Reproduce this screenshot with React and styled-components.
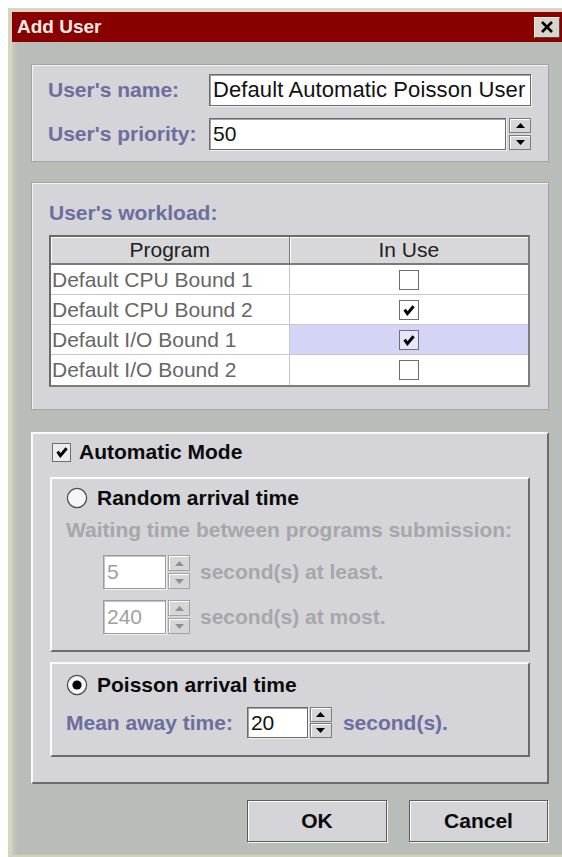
import React from "react";
import styled, { createGlobalStyle } from "styled-components";

const GlobalStyle = createGlobalStyle`
  html, body {
    margin: 0;
    padding: 0;
    background: #ffffff;
    overflow: hidden;
  }
  body {
    font-family: "Liberation Sans", Arial, sans-serif;
  }
  * { box-sizing: border-box; }
`;

const Page = styled.div`
  width: 562px;
  height: 857px;
  padding: 8px 0 0 8px;
`;

const Dialog = styled.div`
  width: 556px;
  height: 849px;
  background: #b9bdb8;
  border-top: 4px solid #ddd6c8;
  border-left: 4px solid #d8d5bf;
  border-bottom: 2px solid #d3d0bc;
  box-shadow: inset 5px 0 5px -3px #cbd0ca;
  display: flex;
  flex-direction: column;
`;

const TitleBar = styled.div`
  flex: none;
  height: 30px;
  background: #880000;
  display: flex;
  align-items: center;
  justify-content: space-between;
  padding: 0 4px 0 5px;
`;

const Title = styled.span`
  font-weight: bold;
  font-size: 19px;
  color: #f7ebe0;
`;

const CloseButton = styled.div`
  width: 26px;
  height: 21px;
  background: #d9d3c7;
  border: 1px solid;
  border-color: #f4efe6 #4e4a46 #4e4a46 #f4efe6;
  display: flex;
  align-items: center;
  justify-content: center;
`;

const Body = styled.div`
  flex: 1;
  display: flex;
  flex-direction: column;
  padding: 22px 15px 0 19px;
`;

const EtchedPanel = styled.section`
  background: #d5d4d9;
  border: 1px solid #a3a3a8;
  box-shadow: inset 1px 1px 0 #f3f3f5;
  padding: ${(p) => p.$pad};
  margin-top: ${(p) => p.$top || 0}px;
`;

const RaisedPanel = styled.section`
  background: #d5d4d9;
  border: 2px solid;
  border-color: #fbfbfb #6c6c6c #6c6c6c #fbfbfb;
  padding: ${(p) => p.$pad};
  margin-top: ${(p) => p.$top || 0}px;
`;

const FormGrid = styled.div`
  display: grid;
  grid-template-columns: 161px 1fr;
  row-gap: 12px;
  align-items: center;
`;

const Label = styled.span`
  font-size: 21px;
  font-weight: bold;
  line-height: 24px;
  white-space: nowrap;
  color: ${(p) => (p.$disabled ? "#a7a6ab" : "#6b6e9e")};
`;

const BoldText = styled.span`
  font-size: 21px;
  font-weight: bold;
  line-height: 22px;
  color: #0a0a0a;
  white-space: nowrap;
`;

const Field = styled.div`
  height: ${(p) => p.$h || 32}px;
  width: ${(p) => (p.$w ? `${p.$w}px` : "auto")};
  flex: ${(p) => (p.$w ? "none" : "1")};
  background: #ffffff;
  border: 1px solid ${(p) => (p.$disabled ? "#9a9a9a" : "#6a6a6a")};
  box-shadow: inset 1px 1px 0 ${(p) => (p.$disabled ? "#c4c4c4" : "#a4a4a4")},
    1px 1px 0 #f2f2f2;
  padding: 0 3px;
  display: flex;
  align-items: center;
  font-size: ${(p) => p.$size || 21}px;
  letter-spacing: ${(p) => p.$track || 0}px;
  color: ${(p) => (p.$disabled ? "#a0a0a0" : "#111111")};
  white-space: nowrap;
  overflow: hidden;
`;

const Spinner = styled.div`
  display: flex;
  gap: ${(p) => p.$gap || 2}px;
  height: ${(p) => p.$h}px;
  flex: ${(p) => (p.$grow ? "1" : "none")};
`;

const SpinButtons = styled.div`
  width: 22px;
  display: flex;
  flex-direction: column;
  justify-content: space-between;
`;

const SpinButton = styled.div`
  height: ${(p) => p.$h}px;
  background: #d6d6d9;
  border: 1px solid ${(p) => (p.$disabled ? "#a2a2a2" : "#7c7c7c")};
  box-shadow: inset 1px 1px 0 #ffffff;
  display: flex;
  align-items: center;
  justify-content: center;
`;

const SectionLabel = styled(Label)`
  display: block;
  margin-bottom: 10px;
`;

const Table = styled.div`
  border: 2px solid;
  border-color: #6a6a6a #7c7c7c #7c7c7c #6a6a6a;
  background: #ffffff;
`;

const HeaderRow = styled.div`
  display: grid;
  grid-template-columns: 1fr 1fr;
  height: 28px;
`;

const HeaderCell = styled.div`
  background: #d8d8db;
  border-right: 1px solid #7a7a7a;
  border-bottom: 2px solid #7a7a7a;
  box-shadow: inset 1px 1px 0 #ffffff;
  display: flex;
  align-items: center;
  justify-content: center;
  font-size: 21px;
  color: #202020;
  &:last-child {
    border-right: none;
  }
`;

const Row = styled.div`
  display: grid;
  grid-template-columns: 1fr 1fr;
  height: 30px;
  border-bottom: 1px solid #c9c9cd;
  &:last-child {
    border-bottom: none;
  }
`;

const NameCell = styled.div`
  display: flex;
  align-items: center;
  padding-left: 1px;
  border-right: 1px solid #c9c9cd;
  font-size: 21px;
  color: #666666;
  white-space: nowrap;
`;

const CheckCell = styled.div`
  display: flex;
  align-items: center;
  justify-content: center;
  background: ${(p) => (p.$selected ? "#d4d4f6" : "#ffffff")};
`;

const Box = styled.div`
  width: ${(p) => p.$size}px;
  height: ${(p) => p.$size}px;
  flex: none;
  border: 1px solid #6e6e6e;
  background: ${(p) => p.$bg || "#ffffff"};
  display: flex;
  align-items: center;
  justify-content: center;
`;

const OptionRow = styled.div`
  display: flex;
  align-items: center;
  gap: ${(p) => p.$gap}px;
  height: ${(p) => p.$h}px;
  margin-top: ${(p) => p.$top || 0}px;
  padding-left: ${(p) => p.$indent || 0}px;
`;

const Note = styled(Label)`
  display: block;
  margin-top: ${(p) => p.$top}px;
`;

const ButtonRow = styled.div`
  display: flex;
  justify-content: flex-end;
  gap: 22px;
  margin-top: 16px;
  padding-right: 1px;
`;

const Button = styled.div`
  width: ${(p) => p.$w}px;
  height: 42px;
  background: #d5d4d9;
  border: 1px solid #5c5c5c;
  box-shadow: inset 1px 1px 0 #ffffff, 1px 1px 0 #f4f4f4;
  display: flex;
  align-items: center;
  justify-content: center;
  font-size: 21px;
  font-weight: bold;
  color: #0a0a0a;
`;

/* classic thick tick used in every check box */
const Check = () => (
  <svg width="12" height="12" viewBox="0 0 12 12">
    <polyline
      points="1.6,5.6 4.4,9.6 10.6,2.2"
      fill="none"
      stroke="#000"
      strokeWidth="3"
    />
  </svg>
);

const CheckBox = ({ checked, size = 20, bg }) => (
  <Box $size={size} $bg={bg}>
    {checked && <Check />}
  </Box>
);

const Radio = ({ on }) => (
  <svg width="22" height="22" viewBox="0 0 22 22">
    <circle cx="11" cy="11" r="9.6" fill="#f6f6f6" stroke="#4c4c4c" strokeWidth="1.3" />
    {on && <circle cx="11" cy="11" r="4.6" fill="#000" />}
  </svg>
);

const Arrow = ({ up, disabled }) => (
  <svg width="9" height="5" viewBox="0 0 9 5">
    <polygon
      points={up ? "0,5 4.5,0 9,5" : "0,0 9,0 4.5,5"}
      fill={disabled ? "#8f8f8f" : "#000"}
    />
  </svg>
);

const SpinControl = ({ value, width, height, half, disabled, grow, size }) => (
  <Spinner $h={height} $grow={grow} $gap={grow ? 3 : 2}>
    <Field $w={width} $h={height} $disabled={disabled} $size={size}>
      {value}
    </Field>
    <SpinButtons>
      <SpinButton $h={half} $disabled={disabled}>
        <Arrow up disabled={disabled} />
      </SpinButton>
      <SpinButton $h={half} $disabled={disabled}>
        <Arrow disabled={disabled} />
      </SpinButton>
    </SpinButtons>
  </Spinner>
);

const programs = [
  { name: "Default CPU Bound 1", used: false },
  { name: "Default CPU Bound 2", used: true },
  { name: "Default I/O Bound 1", used: true, selected: true },
  { name: "Default I/O Bound 2", used: false },
];

export default function App() {
  return (
    <Page>
      <GlobalStyle />
      <Dialog>
        <TitleBar>
          <Title>Add User</Title>
          <CloseButton>
            <svg width="14" height="12" viewBox="0 0 14 12">
              <path d="M2 1 L12 11 M12 1 L2 11" stroke="#000" strokeWidth="2.6" />
            </svg>
          </CloseButton>
        </TitleBar>

        <Body>
          <EtchedPanel $pad="9px 17px 11px 16px">
            <FormGrid>
              <Label>User's name:</Label>
              <Field $size={22} $track={0.1}>Default Automatic Poisson User</Field>
              <Label>User's priority:</Label>
              <SpinControl value="50" height={32} half={15} grow />
            </FormGrid>
          </EtchedPanel>

          <EtchedPanel $top={20} $pad="18px 18px 22px 17px">
            <SectionLabel>User's workload:</SectionLabel>
            <Table>
              <HeaderRow>
                <HeaderCell>Program</HeaderCell>
                <HeaderCell>In Use</HeaderCell>
              </HeaderRow>
              {programs.map((p) => (
                <Row key={p.name}>
                  <NameCell>{p.name}</NameCell>
                  <CheckCell $selected={p.selected}>
                    <CheckBox checked={p.used} bg={p.selected ? "#e6e6fa" : "#ffffff"} />
                  </CheckCell>
                </Row>
              ))}
            </Table>
          </EtchedPanel>

          <RaisedPanel $top={22} $pad="8px 17px 25px 17px">
            <OptionRow $h={20} $gap={8} $indent={2}>
              <CheckBox checked size={19} bg="#ececef" />
              <BoldText>Automatic Mode</BoldText>
            </OptionRow>

            <RaisedPanel $top={15} $pad="8px 14px 16px 14px">
              <OptionRow $h={22} $gap={9}>
                <Radio />
                <BoldText>Random arrival time</BoldText>
              </OptionRow>
              <Note $top={9} $disabled>
                Waiting time between programs submission:
              </Note>
              <OptionRow $h={34} $gap={10} $top={13} $indent={37}>
                <SpinControl value="5" width={63} height={34} half={16} disabled />
                <Label $disabled>second(s) at least.</Label>
              </OptionRow>
              <OptionRow $h={34} $gap={10} $top={11} $indent={37}>
                <SpinControl value="240" width={63} height={34} half={16} disabled />
                <Label $disabled>second(s) at most.</Label>
              </OptionRow>
            </RaisedPanel>

            <RaisedPanel $top={10} $pad="10px 14px 17px 14px">
              <OptionRow $h={22} $gap={9}>
                <Radio on />
                <BoldText>Poisson arrival time</BoldText>
              </OptionRow>
              <OptionRow $h={31} $gap={14} $top={11}>
                <Label>Mean away time:</Label>
                <OptionRow $h={31} $gap={11}>
                  <SpinControl value="20" width={61} height={31} half={15} />
                  <Label>second(s).</Label>
                </OptionRow>
              </OptionRow>
            </RaisedPanel>
          </RaisedPanel>

          <ButtonRow>
            <Button $w={140}>OK</Button>
            <Button $w={139}>Cancel</Button>
          </ButtonRow>
        </Body>
      </Dialog>
    </Page>
  );
}
